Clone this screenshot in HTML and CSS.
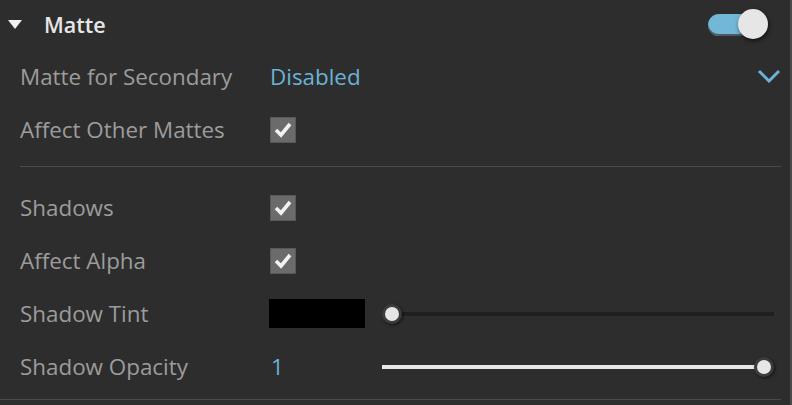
FILE: index.html
```html
<!DOCTYPE html>
<html lang="en">
<head>
  <meta charset="UTF-8">
  <title>Matte</title>
  <link rel="stylesheet" href="styles.css">
</head>
<body>

  <div class="panel">
    <div class="header">
      <span class="caret"></span>
      <span class="title">Matte</span>
      <div class="toggle on">
        <div class="knob"></div>
      </div>
    </div>

    <div class="group">
      <div class="row">
        <div class="label">Matte for Secondary</div>
        <div class="value select">
          <span class="blue">Disabled</span>
          <svg class="chevron" width="24" height="14" viewBox="0 0 24 14">
            <polyline points="2,2 12,12 22,2" fill="none" stroke="#6ab2d6" stroke-width="3"/>
          </svg>
        </div>
      </div>
      <div class="row">
        <div class="label">Affect Other Mattes</div>
        <div class="value"><span class="check"></span></div>
      </div>
    </div>

    <div class="divider"></div>

    <div class="section">
      <div class="row">
        <div class="label">Shadows</div>
        <div class="value"><span class="check"></span></div>
      </div>
      <div class="row">
        <div class="label">Affect Alpha</div>
        <div class="value"><span class="check"></span></div>
      </div>
      <div class="row">
        <div class="label">Shadow Tint</div>
        <div class="value">
          <div class="lead"><span class="swatch"></span></div>
          <div class="slider">
            <span class="dot"></span>
            <span class="track dark"></span>
          </div>
        </div>
      </div>
      <div class="row">
        <div class="label">Shadow Opacity</div>
        <div class="value">
          <div class="lead"><span class="blue num">1</span></div>
          <div class="slider">
            <span class="track light"></span>
            <span class="dot"></span>
          </div>
        </div>
      </div>
    </div>

    <div class="bottom"></div>
  </div>

</body>
</html>
```

FILE: styles.css
```css
body {
  margin: 0;
  background: #2d2d2d;
  font-family: "Open Sans", "Noto Sans", sans-serif;
  overflow: hidden;
}

.panel {
  width: 790px;
  height: 405px;
  border-right: 2px solid #4b4b4b;
}

.header {
  display: flex;
  align-items: center;
  height: 48px;
  padding: 0 22px 0 8px;
}

.caret {
  width: 0;
  height: 0;
  border-left: 7px solid transparent;
  border-right: 7px solid transparent;
  border-top: 9px solid #f0f0f0;
  margin-top: 1px;
}

.title {
  margin-left: 22px;
  font-size: 21.5px;
  font-weight: 600;
  color: #e6e6e6;
  flex: 1;
}

.toggle {
  position: relative;
  width: 60px;
  height: 30px;
}

.toggle .knob {
  position: absolute;
  right: 0;
  top: 0;
  width: 30px;
  height: 30px;
  border-radius: 50%;
  background: #e6e6e6;
  box-shadow: 1px 2px 4px rgba(0, 0, 0, 0.6);
}

.toggle::before {
  content: "";
  position: absolute;
  left: 0;
  top: 5px;
  width: 52px;
  height: 22px;
  border-radius: 11px;
  background: #72b6d8;
  box-shadow: inset 0 -2px 0 #4f5a60;
}

.group {
  margin-top: 2px;
}

.row {
  display: grid;
  grid-template-columns: 250px 1fr;
  align-items: center;
  height: 53px;
  padding: 0 9px 0 20px;
}

.label {
  font-size: 22.4px;
  color: #9c9c9c;
}

.value {
  display: flex;
  align-items: center;
}

.blue {
  color: #6ab2d6;
  font-size: 22.4px;
}

.select {
  justify-content: space-between;
}

.chevron {
  margin-top: -1px;
}

.check {
  width: 24px;
  height: 24px;
  border: 1px solid #585858;
  background: #6b6b6b url("data:image/svg+xml,%3Csvg xmlns='http://www.w3.org/2000/svg' width='24' height='24'%3E%3Cpolyline points='5,12 10,17 19,6' fill='none' stroke='%23f2f2f2' stroke-width='3.6'/%3E%3C/svg%3E") no-repeat center;
}

.divider {
  height: 1px;
  margin: 10px 9px 0 20px;
  background: #4a4a4a;
}

.section {
  padding-top: 14px;
}

.lead {
  width: 112px;
  display: flex;
  align-items: center;
}

.swatch {
  width: 96px;
  height: 29px;
  background: #000;
  margin-left: -1px;
}

.num {
  padding-left: 1px;
}

.slider {
  flex: 1;
  display: flex;
  align-items: center;
  margin-right: 7px;
}

.track {
  flex: 1;
  height: 4px;
}

.track.dark {
  background: #1f1f1f;
  margin-left: -10px;
}

.track.light {
  background: #e8e8e8;
  margin-right: -10px;
}

.dot {
  position: relative;
  z-index: 1;
  width: 14px;
  height: 14px;
  border-radius: 50%;
  background: #e6e6e6;
  border: 3px solid #3c3c3c;
  box-shadow: 1px 1px 3px rgba(0, 0, 0, 0.6);
}

.bottom {
  height: 1px;
  margin: 6px 9px 0 0;
  background: #4a4a4a;
}
```
